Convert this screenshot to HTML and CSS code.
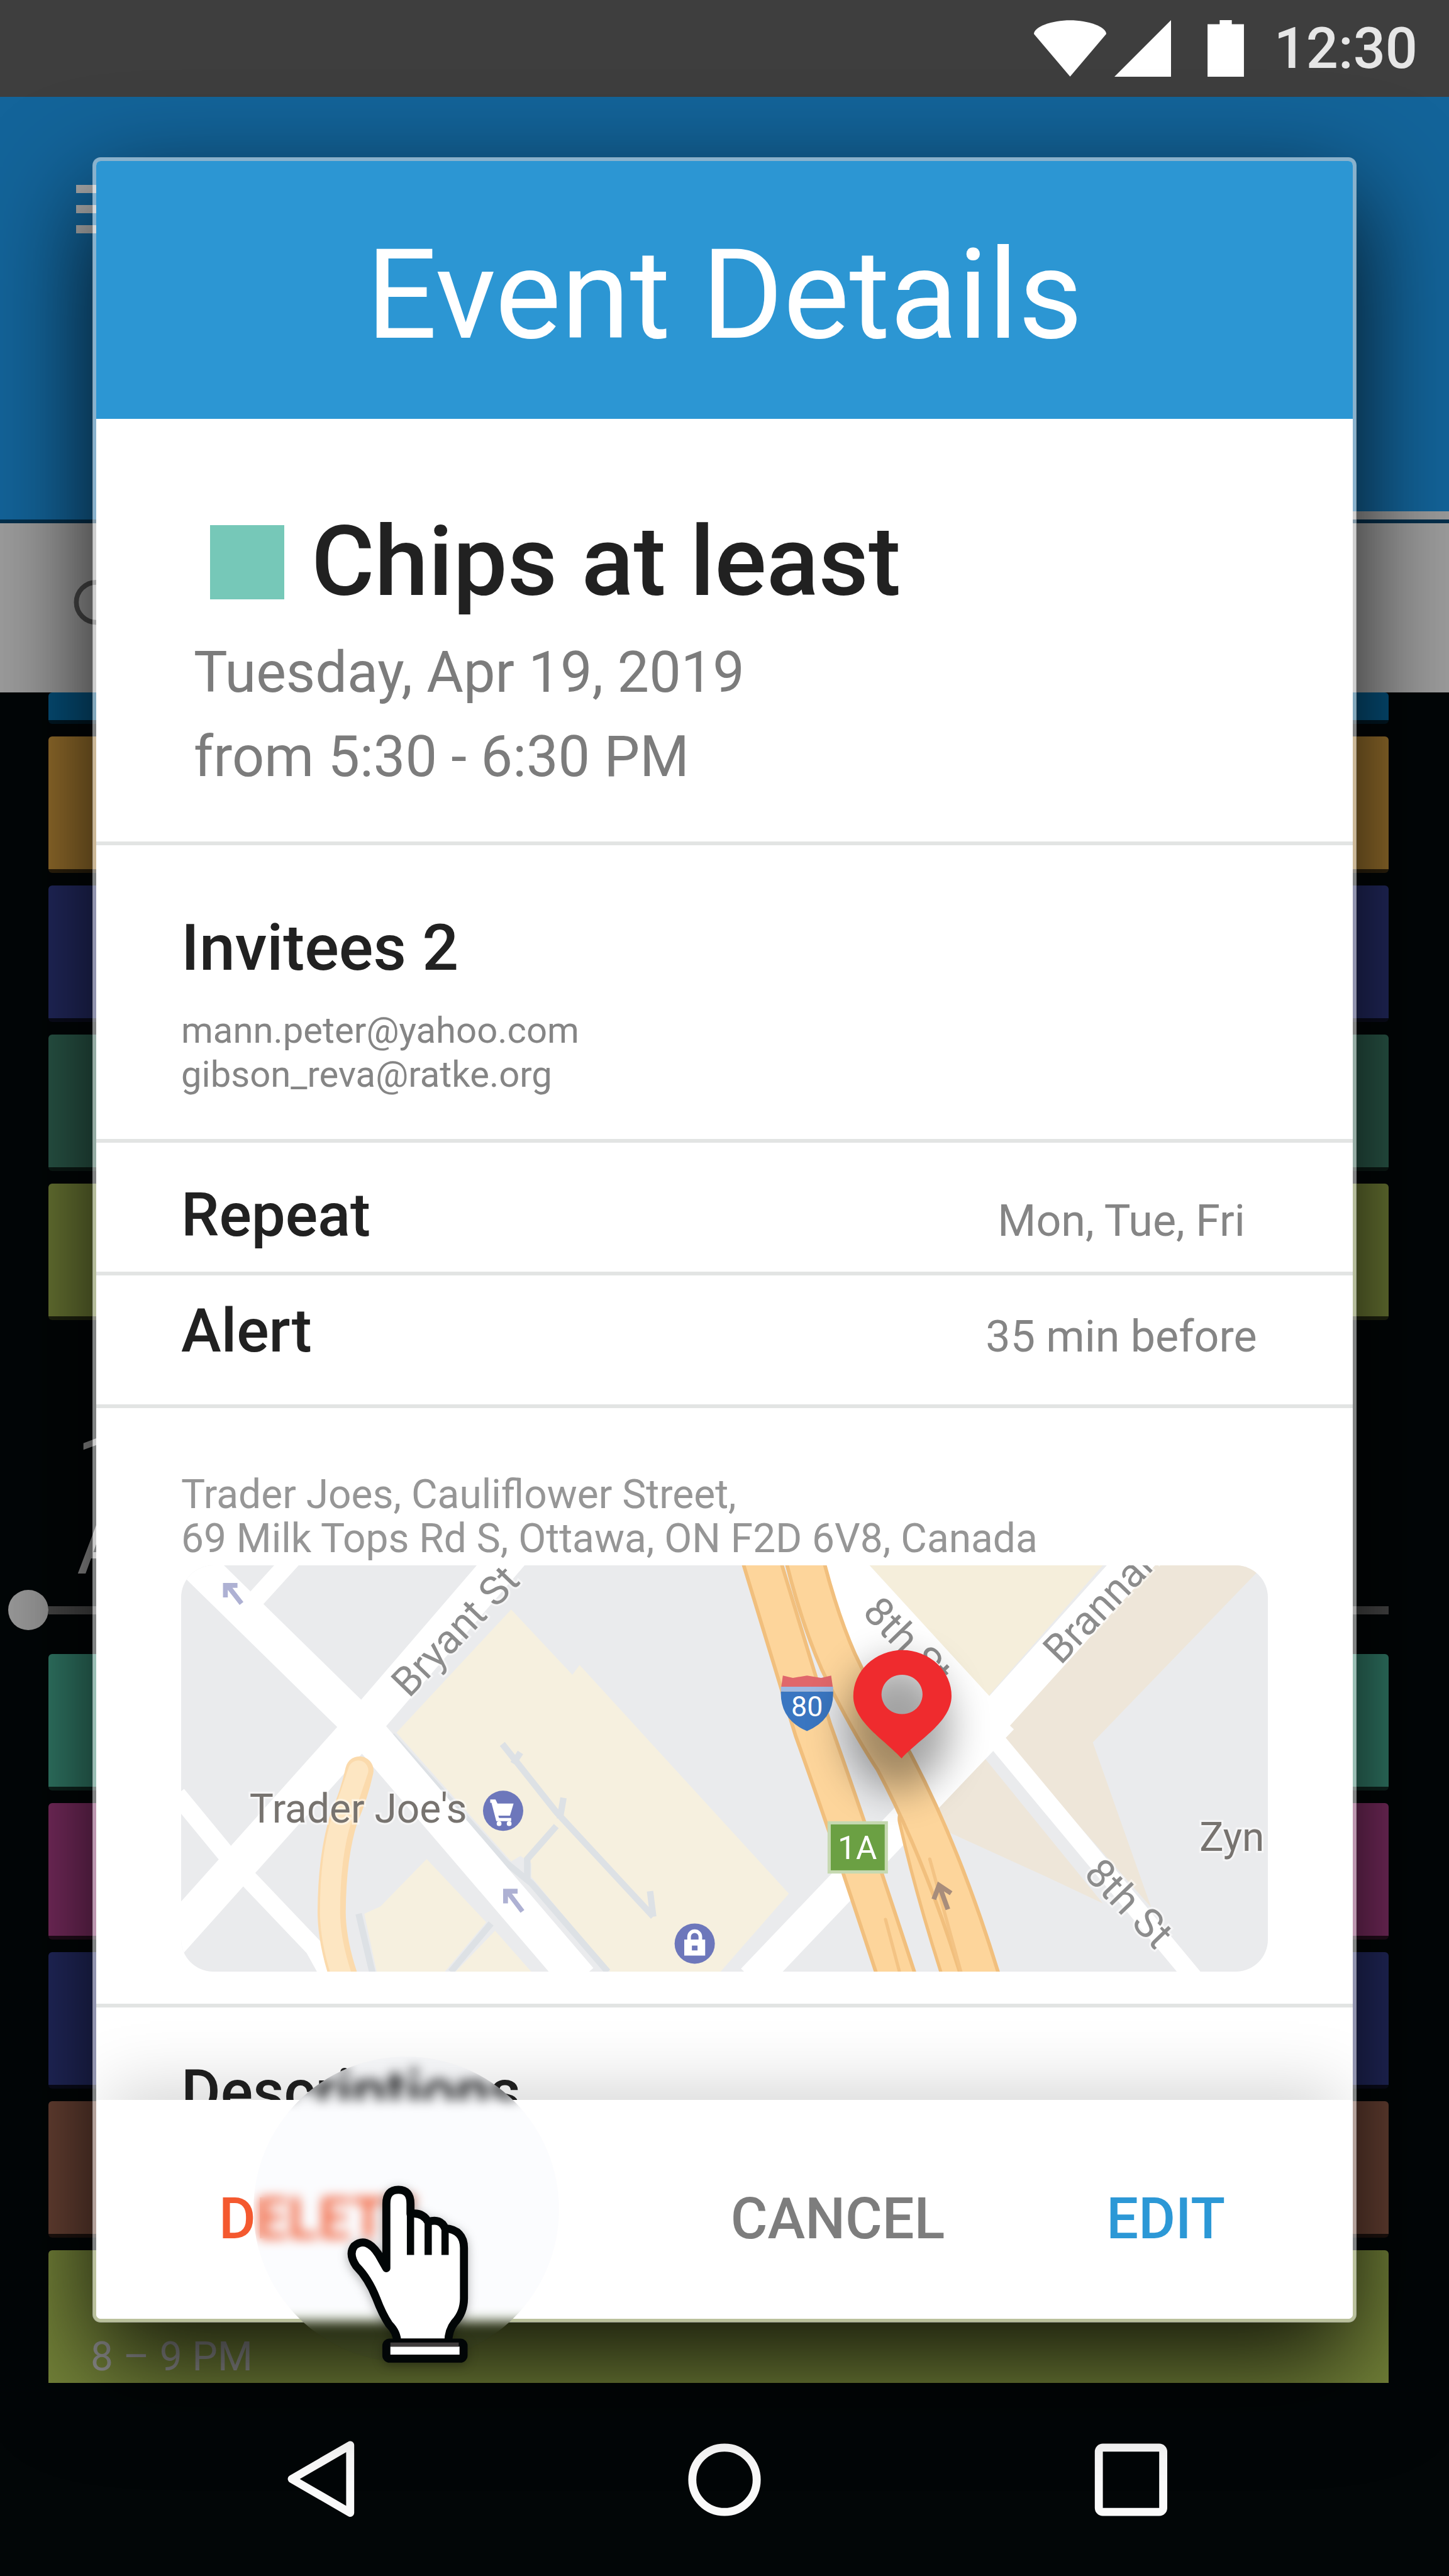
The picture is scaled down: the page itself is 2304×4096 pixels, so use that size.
FILE: index.html
```html
<!DOCTYPE html>
<html lang="en">
<head>
<meta charset="utf-8">
<meta name="viewport" content="width=device-width, initial-scale=1">
<title>Event Details</title>
<link rel="stylesheet" href="styles.css">
</head>
<body>
<div class="screen">
  <div class="status-bar">
    <svg class="status-wifi" viewBox="0 0 18 14" aria-hidden="true"><path d="M9 14 0 3.4C0 1.6 4.6 0 9 0s9 1.600 9 3.400z"/></svg>
    <svg class="status-signal" viewBox="0 0 14 14" aria-hidden="true"><path d="M14 0v14H0z"/></svg>
    <svg class="status-battery" viewBox="0 0 9 14" aria-hidden="true"><path d="M3 0h3v1h3v13H0V1h3z"/></svg>
    <time class="status-time">12:30</time>
  </div>

  <header class="app-bar">
    <button class="menu-button" aria-label="Menu"><span></span><span></span><span></span></button>
    <div class="tab-line"></div>
  </header>
  <div class="search-bar">
    <svg viewBox="0 0 16 16" aria-hidden="true"><circle cx="6" cy="5.600" r="5"/><path d="M10 9.600l5 5"/></svg>
  </div>

  <div class="agenda">
    <div class="event event-cut blue"></div>
    <div class="event ochre"></div>
    <div class="event navy"></div>
    <div class="event green"></div>
    <div class="event olive"></div>
    <div class="day">
      <div class="day-label">19</div>
      <div class="day-label">Apr</div>
      <div class="now"><span class="now-dot"></span><span class="now-line"></span></div>
    </div>
    <div class="event teal"></div>
    <div class="event magenta"></div>
    <div class="event navy"></div>
    <div class="event brown"></div>
    <div class="event olive-light">8 – 9 PM</div>
  </div>

  <nav class="nav-bar">
    <button aria-label="Back"><svg viewBox="0 0 20 20"><path d="M17 1.400v16.800L2.500 9.800z"/></svg></button>
    <button aria-label="Home"><svg viewBox="0 0 20 20"><circle cx="10" cy="10" r="8"/></svg></button>
    <button aria-label="Recent apps"><svg viewBox="0 0 20 20"><rect x="3" y="2" width="16" height="16" rx="1"/></svg></button>
  </nav>

  <section class="dialog" role="dialog" aria-labelledby="dialog-title">
    <header class="dialog-head"><h1 id="dialog-title">Event Details</h1></header>
    <div class="dialog-body">
      <section class="summary">
        <div class="summary-title"><span class="swatch"></span><h2>Chips at least</h2></div>
        <p class="when">Tuesday, Apr 19, 2019<br>from 5:30 - 6:30 PM</p>
      </section>
      <section class="invitees">
        <h3>Invitees 2</h3>
        <p>mann.peter@yahoo.com<br>gibson_reva@ratke.org</p>
      </section>
      <section class="setting repeat"><h3>Repeat</h3><p>Mon, Tue, Fri</p></section>
      <section class="setting alert"><h3>Alert</h3><p>35 min before</p></section>
      <section class="place">
        <address>Trader Joes, Cauliflower Street,<br>69 Milk Tops Rd S, Ottawa, ON F2D 6V8, Canada</address>
        <svg class="map" viewBox="0 0 270 101" preserveAspectRatio="xMidYMid slice" role="img" aria-label="Map of the event location">
          <defs>
            <filter id="soft" x="-60%" y="-60%" width="220%" height="220%"><feGaussianBlur stdDeviation="5"/></filter>
          </defs>
          <rect width="270" height="101" fill="#eaebed"/>
          <path fill="#f6f0df" d="M82 11 97.200 27.200 99 24.800 151 81.600 134 101H106.600L87 77.400V74L84.300 72.200 82 73.600 53.500 41.600zM61 73 75.800 88.700 65.500 101H48.600L45.500 86.600 49.500 84.800zM78 90.800 87 101H68.200z"/>
          <path fill="#f5eedb" d="M171 0h58l-28.400 32.500z"/>
          <path fill="#eee6d9" d="M242 0h27L226.500 44 241 85 203 42zM199.700 48 229 84 215 77.400 190.400 66.200 186 60z"/>
          <g fill="none" stroke="#dde1e5" stroke-width="1.600">
            <path d="M52.300 42.300 80.700 73.900 87 79 106 101M93.200 64.800 86 73V78M79.800 44.400 93.200 61.300 117.300 87.300M84.300 46.500 82.500 49.300M95 57.800 94.100 63M116.500 81 117.300 87.300M44.100 86.600 47.700 102M77 89 67 101"/>
          </g>
          <g fill="none" stroke="#fff">
            <path stroke-width="9" d="M-4-8 45 40 99 103M82-3 45 40-6 97"/>
            <path stroke-width="4.500" d="M-1 57 13 74 33 95 38 104M18 9 28-2"/>
            <path stroke-width="8" d="M204 38 142 103"/>
            <path stroke-width="4.500" d="M202.900 44 252 103"/>
          </g>
          <path fill="#fff" d="M158 0h13l29.800 32.500L230 0h12L204 42 187.500 60 176 48z"/>
          <g fill="none" stroke-linecap="round">
            <path stroke="#fbdaac" stroke-width="7" d="M44.300 51Q43 57 40.500 62.700 37.500 72 37.400 86 37.400 94 41 104"/>
            <path stroke="#fde6c2" stroke-width="5" d="M44 51Q42 57 40 62.700 37 72 37 86 37 94 40.600 104"/>
            <path stroke="#f1bf7d" stroke-width="9" d="M182.500 63Q187 83 195 107"/>
            <path stroke="#fdd59b" stroke-width="7.400" d="M182.500 63Q187 83 195 107"/>
            <path stroke="#f1bf7d" stroke-width="10" d="M143-5Q150 18 157 41 166 66 179 106M154-5Q158 12 163.300 24 170 38 177 48.600 190 73 200 107"/>
            <path stroke="#fdd59b" stroke-width="8.200" d="M143-5Q150 18 157 41 166 66 179 106M154-5Q158 12 163.300 24 170 38 177 48.600 190 73 200 107"/>
            <path stroke="#f3c384" stroke-width=".8" d="M175 88 179 103M186 73 194 102"/>
          </g>
          <g fill="none" stroke="#aeb1d3" stroke-width="1.200">
            <path d="M15 9.500 11.500 5M11 8V5h3M84.800 86 81 81M80.600 84V81h3"/>
            <path stroke="#a88d7b" d="M190.500 85.500 188.500 80M187 83l1.300-3.500 3 2"/>
          </g>
          <g class="map-street">
            <text transform="translate(56.600 33.200) rotate(-46)">Bryant St</text>
            <text transform="translate(169 12) rotate(46)">8th St</text>
            <text transform="translate(218.500 25) rotate(-46)">Brannan</text>
            <text transform="translate(224 77) rotate(46)">8th St</text>
          </g>
          <g class="map-place">
            <text x="17" y="64">Trader Joe's</text>
            <text x="253" y="71">Zyn</text>
          </g>
          <g fill="#6d77bb"><circle cx="80" cy="61" r="5"/><circle cx="127.600" cy="94" r="5"/></g>
          <path fill="#fff" d="M76.800 58.200h1.300l.5 1h4l-.9 3h-2.900l.2.600h3v.8h-3.700l-1.200-4.600h-.3z"/>
          <circle cx="79" cy="64.200" r=".6" fill="#fff"/><circle cx="81.500" cy="64.200" r=".6" fill="#fff"/>
          <path fill="#fff" d="M125 93h5.200v4H125z"/><path fill="none" stroke="#fff" stroke-width=".9" d="M126.200 93v-.7a1.400 1.400 0 0 1 2.800 0v.7"/>
          <path fill="#6d77bb" d="M126.900 94.500h1.400v1.200h-1.400z"/>
          <path fill="#e0676b" d="M149.500 27.400 152 28l3.500-.6 3.500.6 2.500-.6.4 2.800h-12.800z"/>
          <path fill="#9eb9e2" d="M149 30.200h13v1.200h-13z"/>
          <path fill="#3a76c1" d="M149 31.400h13q.2 7-6.500 9.800-6.700-2.800-6.500-9.800z"/>
          <text class="map-shield" x="155.500" y="37.500">80</text>
          <rect x="161" y="64" width="14.200" height="12.200" fill="#6ba043" stroke="#c6d9b1" stroke-width=".8"/>
          <text class="map-exit" x="168" y="73">1A</text>
          <ellipse cx="178" cy="40" rx="13" ry="16" fill="#000" opacity=".36" filter="url(#soft)"/>
          <path fill="#ef2b2e" fill-rule="evenodd" d="M179 48C175 43.500 167 39 167 32.500a12.200 11.400 0 0 1 24.400 0C191.400 39 183 43.500 179 48zM179.100 27.200a5.100 4.900 0 1 0 .01 0z"/>
        </svg>
      </section>
      <section class="description"><h3>Descriptions</h3></section>
    </div>
    <footer class="dialog-actions">
      <button class="action-delete">DELETE</button>
      <button class="action-cancel">CANCEL</button>
      <button class="action-edit">EDIT</button>
    </footer>
  </section>

  <div class="touch"></div>
  <svg class="hand" viewBox="85 542 33 48" aria-hidden="true">
    <path fill="#fff" stroke="#020607" stroke-width="2" stroke-linejoin="round" d="M96 563.500V547.500Q96 544 99 544T102 547.500V550Q105 549.500 106.400 552 109.500 551 110.600 553.600 115.300 554 115.300 558.500V571Q115.300 574.500 113 577 111.400 579 111.400 582H98.700Q98.700 579.500 96.700 577.500 95 575 93.500 571 91.500 566 88.500 563 86.500 560 88 558 91 555.500 94 560z"/>
    <path fill="none" stroke="#020607" stroke-width="1.800" d="M102 550v10.200M106.400 552v8.200M110.600 553.600v6.600"/>
    <rect x="96" y="582" width="19.200" height="4" rx=".8" fill="#fff" stroke="#020607" stroke-width="2"/>
    <path stroke="#403d3d" d="M97 582.500h17"/>
  </svg>
</div>
</body>
</html>
```
FILE: styles.css
```css
* { box-sizing: border-box; }

body {
  margin: 0;
  background: #020607;
  font-family: Roboto, "Liberation Sans", sans-serif;
}

h1, h2, h3, p { margin: 0; }

button {
  margin: 0;
  padding: 0;
  border: 0;
  background: none;
  font: inherit;
}

svg { display: block; }

.screen {
  position: relative;
  display: flex;
  flex-direction: column;
  height: 100vh;
  min-height: 4096px;
  overflow: hidden;
}

/* Status bar */
.status-bar {
  display: flex;
  align-items: center;
  justify-content: flex-end;
  flex: none;
  height: 154px;
  padding-right: 50px;
  background: #3e3e3e;
}
.status-bar svg { height: 90px; fill: #fff; }
.status-wifi { width: 115px; margin-right: 13px; }
.status-signal { width: 90px; margin-right: 58px; }
.status-battery { width: 58px; margin-right: 48px; }
.status-time { color: #e6e6e6; font-size: 90px; font-weight: 500; }

/* Calendar behind the dialog */
.app-bar {
  display: flex;
  flex-direction: column;
  justify-content: space-between;
  flex: none;
  height: 678px;
  padding-top: 140px;
  border-bottom: 6px solid #04304d;
  background: #13649a;
}
.menu-button {
  display: grid;
  gap: 19px;
  width: 115px;
  margin-left: 121px;
}
.menu-button span { height: 13px; background: #b0b0b0; }
.tab-line { width: 50%; height: 13px; margin-left: auto; background: #9b9b9b; }

.search-bar {
  flex: none;
  height: 269px;
  padding: 90px 115px;
  background: #9d9d9d;
}
.search-bar svg { width: 102px; fill: none; stroke: #4a4a4a; stroke-width: 1.2; }

.agenda {
  display: flex;
  flex-direction: column;
  flex: 1;
  min-height: 0;
  overflow: hidden;
}
.event {
  flex: none;
  height: 217px;
  margin: 0 96px 20px 77px;
  padding: 132px 67px 0;
  border-bottom: 6px solid rgba(0, 0, 0, .7);
  border-radius: 6px;
  color: #999;
  font-size: 64px;
  line-height: 76px;
}
.event-cut { height: 50px; padding: 0; }
.blue { background: #05507b; }
.ochre { background: #966f2c; }
.navy { background: #22295f; }
.green { background: #2a5849; }
.olive { background: #6b7834; }
.teal { background: #327c69; }
.magenta { background: #7a2c60; }
.brown { background: #694234; }
.olive-light { background: #748339; border-bottom: 0; }

.day { flex: none; height: 511px; padding-top: 147px; }
.day-label {
  margin-left: 122px;
  color: #999;
  font-size: 128px;
  line-height: 128px;
}
.now { display: flex; align-items: center; margin: 6px 96px 0 13px; }
.now-dot { width: 64px; height: 64px; border-radius: 50%; background: #9b9b9b; }
.now-line { flex: 1; height: 13px; background: #484848; }

.nav-bar {
  display: grid;
  grid-template-columns: repeat(3, 1fr);
  align-items: center;
  justify-items: center;
  flex: none;
  height: 307px;
  padding: 0 192px;
}
.nav-bar svg {
  width: 128px;
  fill: none;
  stroke: #fafafa;
  stroke-width: 2;
  stroke-linejoin: round;
}

/* Dialog */
.dialog {
  position: absolute;
  inset: 250px 147px 403px;
  display: flex;
  flex-direction: column;
  overflow: hidden;
  border: 6px solid rgba(255, 255, 255, .5);
  border-radius: 13px;
  background: #fff;
  background-clip: padding-box;
  box-shadow: 0 64px 170px rgba(0, 0, 0, .85);
}
.dialog-head {
  flex: none;
  height: 410px;
  padding-top: 97px;
  background: #2c96d3;
  color: #fff;
  text-align: center;
}
.dialog-head h1 { font-size: 198px; font-weight: 400; line-height: 232px; }

.dialog-body { flex: 1; min-height: 0; overflow: hidden; }
.dialog-body > section { border-bottom: 6px solid #e2e4e3; }
.dialog-body h2, .dialog-body h3 { color: #212121; font-weight: 500; }

.summary { padding: 138px 155px 67px; }
.summary-title { display: flex; align-items: center; gap: 43px; padding-left: 26px; }
.swatch { width: 118px; height: 118px; background: #76c8b8; }
.summary h2 { font-size: 154px; line-height: 180px; }
.when { margin-top: 19px; color: #7c7c7c; font-size: 90px; line-height: 134px; }

.dialog-body h3 { font-size: 96px; line-height: 120px; }
.invitees { padding: 103px 135px 68px; }
.dialog-body .invitees h3 { font-size: 102px; }
.invitees p { margin-top: 36px; color: #858585; font-size: 58px; line-height: 70px; }

.setting {
  display: flex;
  align-items: baseline;
  justify-content: space-between;
  padding: 55px 148px 30px 135px;
}
.alert { padding-top: 28px; padding-bottom: 57px; }
.setting p { width: 440px; color: #858585; font-size: 70px; text-align: center; }

.place { padding: 103px 135px 51px; }
.place address { color: #969696; font-size: 64px; font-style: normal; line-height: 70px; }
.map { width: 100%; height: 646px; margin-top: 7px; border-radius: 51px; }
.map text { paint-order: stroke; }
.map-street { fill: #8c8c8c; font-size: 10px; stroke: #fff; stroke-opacity: .5; stroke-width: 1px; }
.map-place { fill: #77736f; font-size: 10px; stroke: #fff; stroke-opacity: .5; stroke-width: 1px; }
.map-shield, .map-exit { fill: #fff; text-anchor: middle; }
.map-shield { font-size: 7px; }
.map-exit { font-size: 8px; }

.description { padding: 74px 135px; }

.dialog-actions {
  position: relative;
  display: flex;
  align-items: center;
  flex: none;
  height: 348px;
  padding: 30px 203px 0 195px;
  background: #fff;
  box-shadow: 0 -40px 100px -20px rgba(0, 0, 0, .17);
  font-size: 90px;
  font-weight: 500;
}
.action-delete { margin-right: auto; color: #f4592f; }
.action-cancel { margin-right: 257px; color: #7d7d7d; }
.action-edit { color: #2c98d6; }

/* Touch point and pointer over the dialog */
.touch {
  position: absolute;
  top: 3270px;
  left: 403px;
  width: 486px;
  height: 486px;
  border-radius: 50%;
  background: rgba(0, 60, 200, .016);
  backdrop-filter: blur(9px);
}
.hand {
  position: absolute;
  top: 3469px;
  left: 544px;
  width: 211px;
  height: 307px;
  filter: drop-shadow(0 4px 8px rgba(0, 0, 0, .3));
}
```
